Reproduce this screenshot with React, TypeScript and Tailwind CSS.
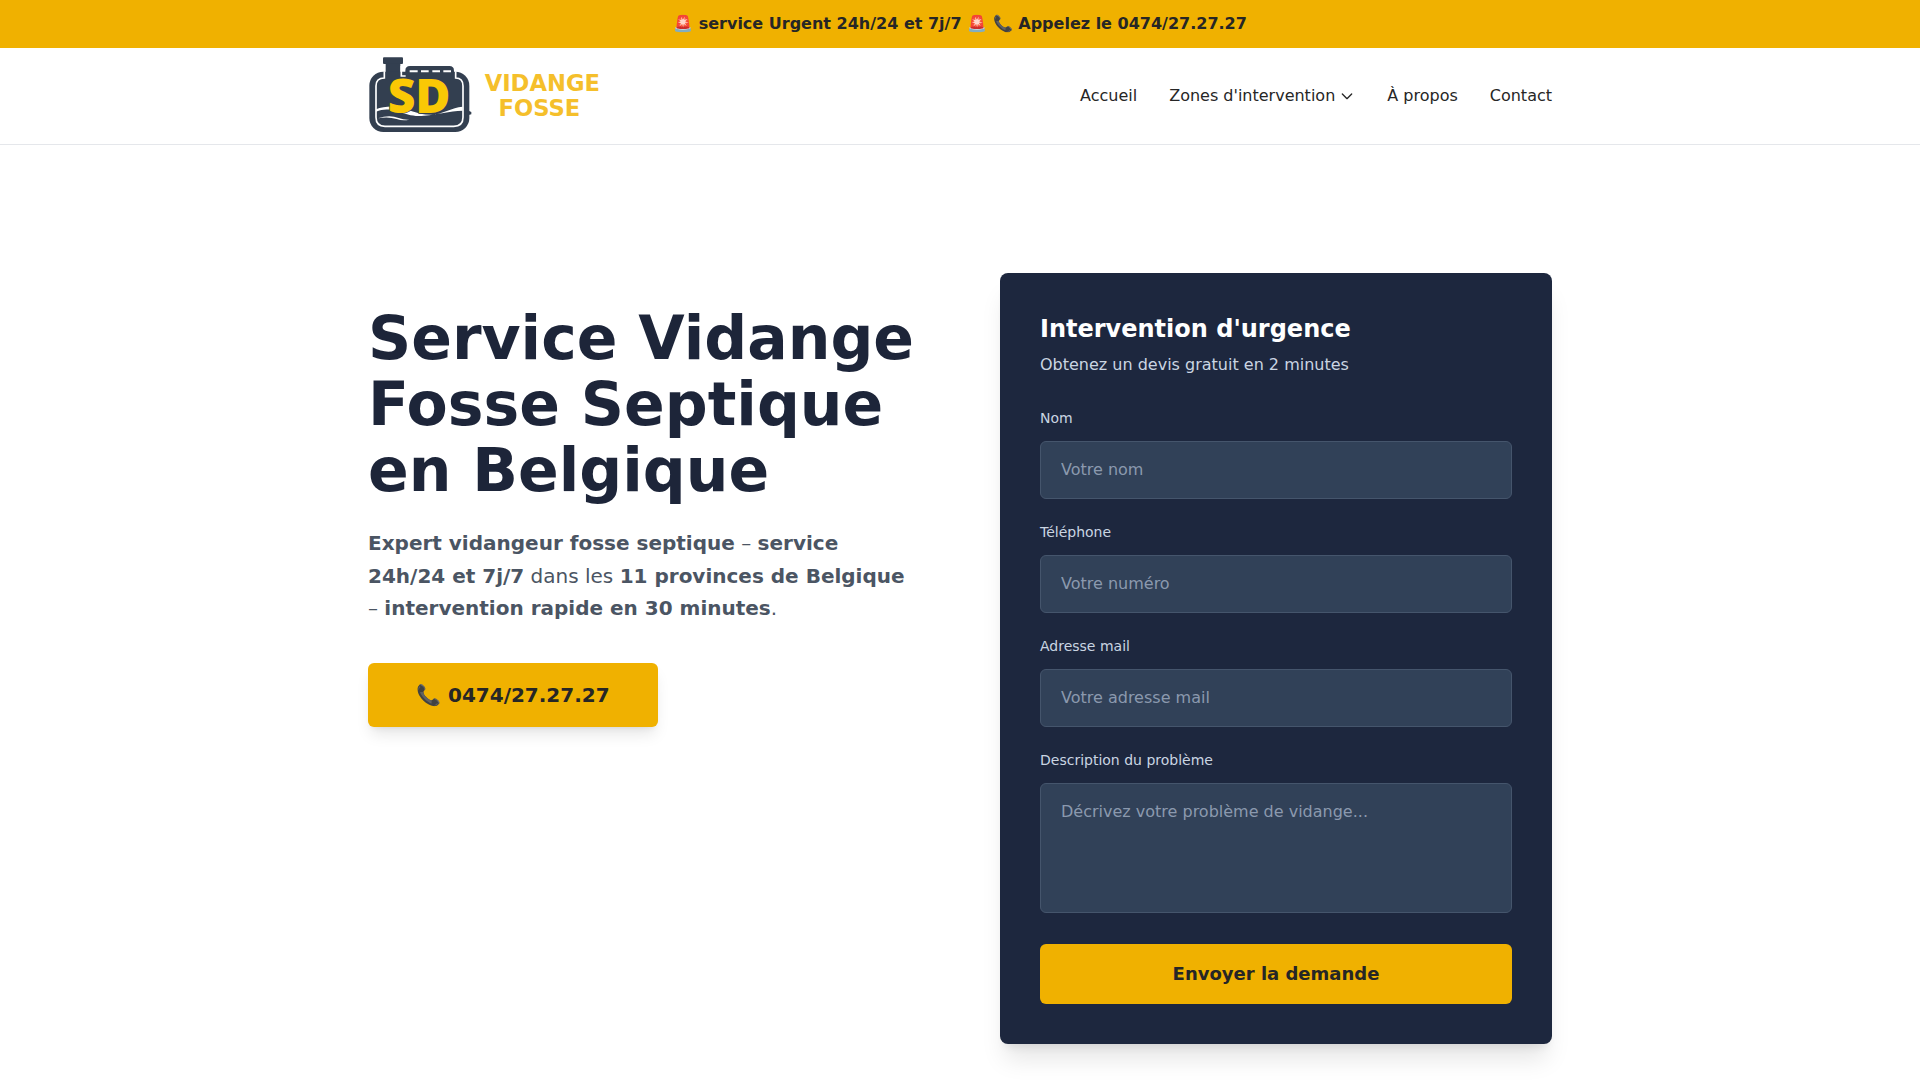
import { FC, useState } from "react";

interface iLink {
  id: number;
  name: string;
  href: string;
  menu?: boolean;
}

interface iField {
  id: string;
  label: string;
  type: string;
  placeholder: string;
}

const links: Array<iLink> = [
  { id: 1, name: "Accueil", href: "#accueil" },
  { id: 2, name: "Zones d'intervention", href: "#zones", menu: true },
  { id: 3, name: "À propos", href: "#a-propos" },
  { id: 4, name: "Contact", href: "#contact" },
];

const fields: Array<iField> = [
  { id: "nom", label: "Nom", type: "text", placeholder: "Votre nom" },
  {
    id: "telephone",
    label: "Téléphone",
    type: "tel",
    placeholder: "Votre numéro",
  },
  {
    id: "mail",
    label: "Adresse mail",
    type: "email",
    placeholder: "Votre adresse mail",
  },
];

const Logo: FC = () => (
  <svg
    viewBox="24 24 720 240"
    className="h-20 w-60"
    role="img"
    aria-label="SD Vidange Fosse"
  >
    {/* chimney and tank */}
    <rect x="69" y="28" width="60" height="20" rx="3" fill="#333f50" />
    <rect x="77" y="46" width="44" height="50" fill="#333f50" />
    <path d="M136 84V68q0-14 14-14h118q14 0 14 14v16z" fill="#333f50" />
    <rect x="28" y="71" width="300" height="181" rx="42" fill="#333f50" />
    <path d="M326 188l8 4v7l-8 2z" fill="#333f50" />
    <path
      d="M73 70v20q-25 0-25 24v94q0 27 27 27h206q28 0 28-27v-94q0-24-22-24V70"
      fill="none"
      stroke="#fff"
      strokeWidth="5"
    />
    <path d="M124 54v30h13" fill="none" stroke="#fff" strokeWidth="5" />
    <path
      d="M149 70h24M183 70h23M217 70h23M250 70h23"
      stroke="#fff"
      strokeWidth="6"
    />
    {/* water */}
    <path
      d="M48 191c20-8 38-8 60-2 34 10 52 18 84 14 44-4 74-14 116-15v-12c-34 2-56 22-92 24-42 2-76-20-108-24q-36-2-60 8z"
      fill="#fff"
    />
    <path
      d="M54 211q34-12 62-1 16 6 32 5-20 5-38-2-26-8-56-2z"
      fill="#fff"
    />
    <text
      x="83"
      y="195"
      fontSize="144"
      fontWeight="800"
      fill="#fac805"
      stroke="#333f50"
      strokeWidth="4"
      paintOrder="stroke"
      className="font-['Open_Sans',sans-serif]"
    >
      SD
    </text>
    <g
      fill="#f5bf2b"
      fontSize="68"
      fontWeight="700"
      textAnchor="middle"
      className="font-['DejaVu_Sans',sans-serif]"
    >
      <text x="547" y="129">
        VIDANGE
      </text>
      <text x="538" y="205">
        FOSSE
      </text>
    </g>
  </svg>
);

const Chevron: FC = () => (
  <svg
    viewBox="0 0 24 24"
    className="h-4 w-4"
    fill="none"
    stroke="currentColor"
    strokeWidth="2"
    strokeLinecap="round"
    strokeLinejoin="round"
    aria-hidden="true"
  >
    <path d="M19 9l-7 7-7-7" />
  </svg>
);

const App: FC = () => {
  const [data, setData] = useState<Record<string, string>>({});

  const changeValue = (id: string, value: string) => {
    setData({ ...data, [id]: value });
  };

  return (
    <div className="min-h-screen bg-white font-['DejaVu_Sans',sans-serif] text-neutral-800">
      <div className="bg-yellow-500 px-4 py-3 text-center font-bold">
        🚨 service Urgent 24h/24 et 7j/7 🚨 📞 Appelez le 0474/27.27.27
      </div>

      <header className="border-b border-gray-200">
        <div className="mx-auto flex h-24 max-w-7xl items-center justify-between px-12">
          <a href="#accueil">
            <Logo />
          </a>
          <nav className="flex items-center gap-8">
            {links.map((el: iLink) => (
              <a
                key={el.id}
                href={el.href}
                className="flex items-center gap-1 hover:text-yellow-500"
              >
                {el.name}
                {el.menu && <Chevron />}
              </a>
            ))}
          </nav>
        </div>
      </header>

      <main className="mx-auto grid max-w-7xl grid-cols-2 items-start gap-20 px-12 pt-32 pb-8">
        <div className="pt-8">
          <h1 className="text-6xl leading-[66px] font-bold text-[#1d2539]">
            Service Vidange Fosse Septique en Belgique
          </h1>
          <p className="mt-6 text-xl leading-relaxed text-[#4b5563]">
            <strong>Expert vidangeur fosse septique</strong> –{" "}
            <strong>service 24h/24 et 7j/7</strong> dans les{" "}
            <strong>11 provinces de Belgique</strong> –{" "}
            <strong>intervention rapide en 30 minutes</strong>.
          </p>
          <a
            href="tel:0474272727"
            className="mt-[38px] inline-flex h-16 items-center rounded-md bg-yellow-500 px-12 text-xl font-bold shadow-lg"
          >
            📞 0474/27.27.27
          </a>
        </div>

        <div className="rounded-lg bg-[#1d273e] p-10 shadow-xl">
          <h2 className="text-2xl font-bold text-white">
            Intervention d'urgence
          </h2>
          <p className="mt-2 mb-8 text-slate-300">
            Obtenez un devis gratuit en 2 minutes
          </p>
          <form
            className="space-y-6"
            onSubmit={(e) => {
              e.preventDefault();
            }}
          >
            {fields.map((el: iField) => (
              <div key={el.id}>
                <label
                  htmlFor={el.id}
                  className="mb-[14px] block text-sm leading-[18px] text-slate-300"
                >
                  {el.label}
                </label>
                <input
                  id={el.id}
                  type={el.type}
                  placeholder={el.placeholder}
                  className="w-full rounded-md border border-slate-600 bg-slate-700 px-5 py-4 text-white outline-none placeholder:text-[#8b99ae] focus:border-yellow-500"
                  value={data[el.id] || ""}
                  onChange={(e) => changeValue(el.id, e.target.value)}
                />
              </div>
            ))}
            <div>
              <label
                htmlFor="description"
                className="mb-[14px] block text-sm leading-[18px] text-slate-300"
              >
                Description du problème
              </label>
              <textarea
                id="description"
                rows={4}
                placeholder="Décrivez votre problème de vidange..."
                className="w-full resize-none rounded-md border border-slate-600 bg-slate-700 px-5 py-4 text-white outline-none placeholder:text-[#8b99ae] focus:border-yellow-500"
                value={data.description || ""}
                onChange={(e) => changeValue("description", e.target.value)}
              />
            </div>
            <button
              type="submit"
              className="w-full rounded-md bg-yellow-500 py-4 text-lg font-bold"
            >
              Envoyer la demande
            </button>
          </form>
        </div>
      </main>
    </div>
  );
};

export default App;
